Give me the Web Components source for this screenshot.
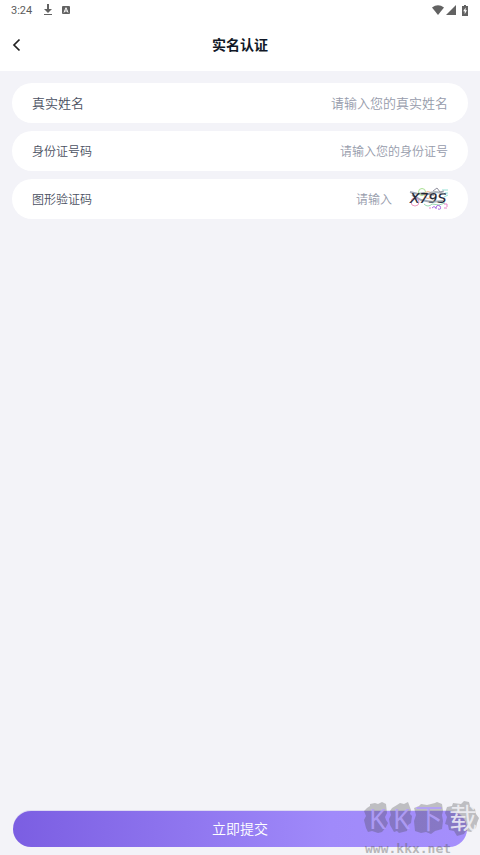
<!DOCTYPE html>
<html lang="zh-CN">
<head>
<meta charset="utf-8">
<meta name="viewport" content="width=device-width, initial-scale=1">
<title>实名认证</title>
<style>
  html, body { margin: 0; }
  body { font-family: "Noto Sans CJK SC", "Noto Sans", sans-serif; background: #f3f3f8; }
</style>
</head>
<body>
<verify-page>
  <status-bar slot="top" time="3:24"></status-bar>
  <page-header slot="top">实名认证</page-header>
  <form-row label="真实姓名" hint="请输入您的真实姓名" size="large"></form-row>
  <form-row label="身份证号码" hint="请输入您的身份证号"></form-row>
  <form-row label="图形验证码" hint="请输入"><captcha-image slot="extra"></captcha-image></form-row>
  <submit-button slot="bottom">立即提交</submit-button>
  <site-watermark slot="overlay"></site-watermark>
</verify-page>

<script>
  const define = (name, html, setup) => {
    const template = document.createElement('template');
    template.innerHTML = html;
    customElements.define(name, class extends HTMLElement {
      constructor() {
        super();
        this.attachShadow({ mode: 'open' }).append(template.content.cloneNode(true));
      }
      connectedCallback() { if (setup) setup(this, this.shadowRoot); }
    });
  };

  define('verify-page', `
    <style>
      :host { display: flex; flex-direction: column; min-height: 100vh; position: relative; background: #f3f3f8; overflow: hidden; }
      main { flex: 1; display: flex; flex-direction: column; gap: 8px; padding: 12px; }
      footer { padding: 0 13px 8px; }
    </style>
    <slot name="top"></slot>
    <main><slot></slot></main>
    <footer><slot name="bottom"></slot></footer>
    <slot name="overlay"></slot>`);

  define('status-bar', `
    <style>
      :host { display: flex; align-items: center; height: 20px; padding: 0 12px 0 11px; background: #fff; color: #5c5c5c; font: 11px/18px Roboto, sans-serif; }
      .left, .right { display: flex; align-items: center; }
      .left { gap: 9px; }
      .right { gap: 2px; margin-left: auto; }
      span { margin-right: 2px; padding-top: 2px; }
      svg { display: block; fill: #626262; }
      .battery { margin-left: 4px; }
    </style>
    <div class="left">
      <span></span>
      <svg width="10" height="12" viewBox="0 0 10 12"><path d="M4 0h2v5h3L5 9 1 5h3zM1 10h8v1H1z"/></svg>
      <svg width="8" height="8" viewBox="0 0 8 8"><rect width="8" height="8" rx="1"/><path d="M2 6.500 4 1.700l2 4.800M2.800 5h2.400" fill="none" stroke="#fff" stroke-width="1"/></svg>
    </div>
    <div class="right">
      <svg width="12" height="10" viewBox="0 0 12 10"><path d="M0 2.500Q6-2 12 2.500L6 10z"/></svg>
      <svg width="10" height="10" viewBox="0 0 10 10"><path d="M0 10 10 0v10z"/></svg>
      <svg class="battery" width="6" height="11" viewBox="0 0 6 11"><path d="M2 0h2v1h2v10H0V1h2z"/><path d="M3.600 2.500 1.200 6.200h1.500v3L5 5.300H3.600z" fill="#fff"/></svg>
    </div>`,
    (host, root) => { root.querySelector('span').textContent = host.getAttribute('time'); });

  define('page-header', `
    <style>
      :host { display: grid; grid-template-columns: 40px 1fr 40px; align-items: center; height: 51px; padding-bottom: 2px; background: #fff; box-sizing: border-box; }
      button { display: flex; align-items: center; height: 40px; margin: 0; padding: 0 0 0 12px; border: 0; background: none; }
      h1 { margin: 0; padding-bottom: 2px; text-align: center; font-size: 14px; line-height: 20px; font-weight: 700; color: #111827; }
      svg { display: block; }
    </style>
    <button type="button" aria-label="返回"><svg width="9" height="14" viewBox="0 0 9 14"><path d="M7.500 1.500 2 7l5.500 5.500" fill="none" stroke="#222" stroke-width="1.700"/></svg></button>
    <h1><slot></slot></h1>`);

  define('form-row', `
    <style>
      :host { display: flex; align-items: center; height: 40px; box-sizing: border-box; padding: 0 20px; border-radius: 20px; background: #fff; font-size: 12px; font-weight: 350; }
      :host([size="large"]) { font-size: 13px; }
      label { color: #4b5162; line-height: 20px; white-space: nowrap; }
      input { flex: 1; min-width: 0; height: 24px; margin: 0; padding: 0 0 2px; border: 0; outline: 0; background: none; font: inherit; color: #4b5162; text-align: right; box-sizing: border-box; }
      input::placeholder { color: #969bab; opacity: 1; }
      ::slotted(*) { margin-left: 17px; }
    </style>
    <label for="field"></label><input id="field" type="text"><slot name="extra"></slot>`,
    (host, root) => {
      root.querySelector('label').textContent = host.getAttribute('label');
      root.querySelector('input').placeholder = host.getAttribute('hint');
    });

  define('captcha-image', `
    <style>
      :host { display: block; }
      button { display: block; margin: 0; padding: 0; border: 0; background: none; }
      svg { display: block; }
      text { font: italic 400 14px "DejaVu Sans", sans-serif; }
    </style>
    <button type="button" aria-label="刷新验证码">
      <svg width="39" height="24" viewBox="0 0 39 24">
        <g fill="none" stroke-width="1">
          <path d="M1 5 9 7l6-1 10 2M3 8l9 5 11 2" stroke="#a3abb8" stroke-width="2"/>
          <circle cx="13" cy="5" r="3.500" stroke="#a8df91"/>
          <circle cx="6" cy="15" r="4" stroke="#ec9bc0"/>
          <circle cx="19" cy="8" r="3.500" stroke="#f4b994"/>
          <path d="M33 3h6m-3 3h3m-4 4 4-2" stroke="#94e0d4"/>
          <path d="m24 4 4-3 3 4 4-1" stroke="#91919f"/>
          <path d="M15 17q4 4 8 0l7 1 6-2" stroke="#9bd9b5"/>
          <path d="M23 21q2-3 4 0m0 1q0-5 4-3 2 4-2 3" stroke="#a967e4"/>
          <path d="M20 21h2m13-4h3v3m-3 1h3" stroke="#e883c8"/>
        </g>
        <text x="1" y="16" fill="#222633" stroke="#222633" stroke-width=".2">X79S</text>
        <path d="M19 7q7-4 16 0M20 15l14-1" fill="none" stroke="#8b969f" stroke-opacity=".7" stroke-width="2"/>
      </svg>
    </button>`);

  define('submit-button', `
    <style>
      :host { display: block; }
      button { display: block; width: 100%; height: 36px; margin: 0; padding: 0 0 2px; border: 0; border-radius: 18px; background: linear-gradient(90deg, #7b5ee2, #a08afa 70%, #a58ffc); box-shadow: 0 -1px 0 #dedaf2; color: #fff; font: inherit; font-size: 14px; line-height: 34px; font-weight: 350; }
    </style>
    <button type="button"><slot></slot></button>`);

  define('site-watermark', `
    <style>
      :host { display: block; position: absolute; right: 0; bottom: 0; pointer-events: none; }
      svg { display: block; }
      .name { font: 400 28px "Noto Sans CJK SC", sans-serif; }
      .k { font: 400 27px "Noto Sans", sans-serif; }
      .url { font: 700 13px "DejaVu Sans Mono", monospace; }
    </style>
    <svg width="117" height="70" viewBox="0 -15 117 70">
      <g fill="#444" fill-opacity=".3">
        <path d="m4 8 3-2V4l5-1 3 1 4-2 4 2 1 9-2 4 1 3 2 3-2 4-4 5-4 1-6-2-4 1-2-4-2-8 2-4-2-5z"/>
        <path d="m29 8 5-3 3-2 4 1 4-2 3 8-1 4 2 2-1 7-3 2-1 6-8 2-2-2-3 1-4-7-1-6 2-4-1-4z"/>
        <path d="m51 8 5-2 2-2 6 1 8-2 2-1 5 2 1 7-1 4 1 6-1 8-7 2-4 3-5-2-5 1-6-2-1-10 2-6z"/>
        <path d="m84 7 5-1 1-3 8 1 3-3 5 1 1 4 5 3 1 5 3 4-2 5-1 5-5 4-5-1-2 3-7 2-3-5-5-1-1-5-3-1 2-7-2-4z"/>
      </g>
      <text class="k" x="6" y="29" fill="#b2a0fa" fill-opacity=".9">K</text>
      <text class="k" x="30" y="29" fill="#b2a0fa" fill-opacity=".9">K</text>
      <text class="name" x="52" y="29" fill="#b2a0fa" fill-opacity=".9">下</text>
      <text class="name" x="86" y="29" fill="#f3f3f8" fill-opacity=".85">载</text>
      <text class="url" x="2" y="53" fill="#555" fill-opacity=".4">www.kkx.net</text>
    </svg>`);
</script>
</body>
</html>
